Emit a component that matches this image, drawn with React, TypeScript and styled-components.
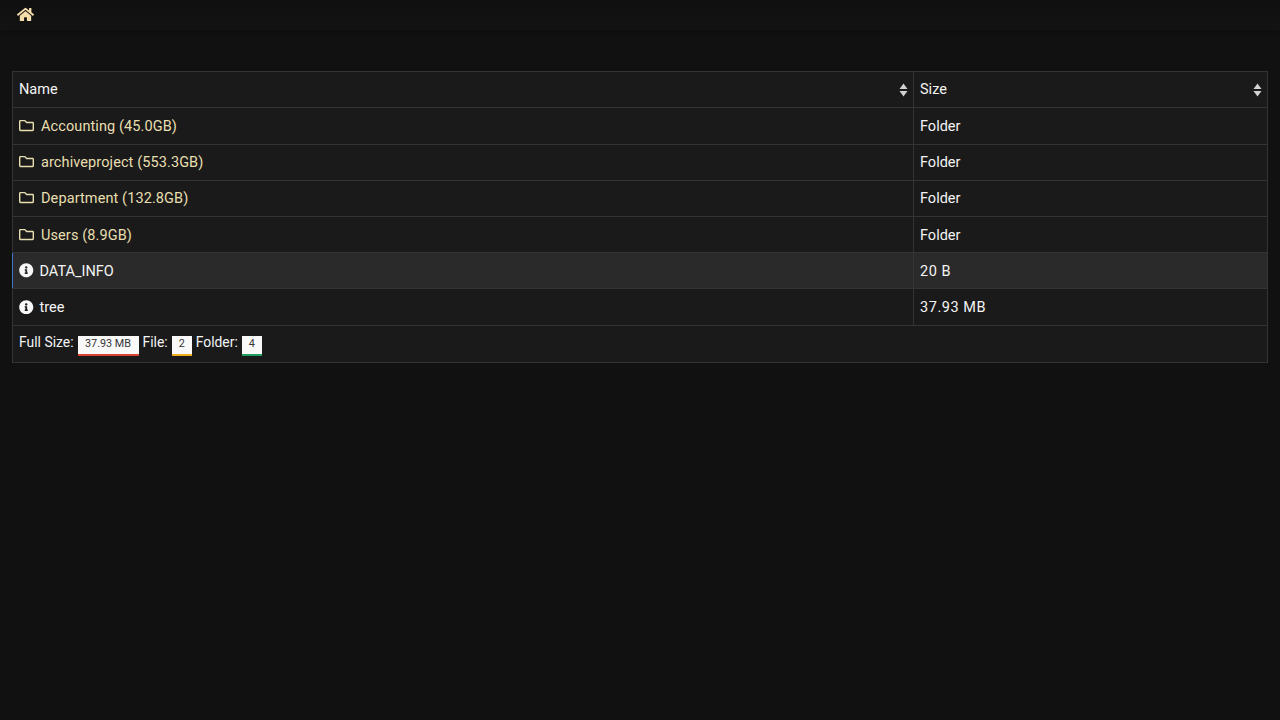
import React from "react";
import styled, { createGlobalStyle } from "styled-components";
import { FaHome, FaInfoCircle, FaRegFolder } from "react-icons/fa";

const Global = createGlobalStyle`
  html, body { margin: 0; padding: 0; background: #111111; }
  body { font-family: "Roboto", "Liberation Sans", sans-serif; font-size: 14.5px; color: #f4f4f4; }
`;

const Page = styled.div`
  min-height: 720px;
  box-sizing: border-box;
`;

const Navbar = styled.nav`
  height: 30px;
  box-sizing: border-box;
  display: flex;
  align-items: center;
  padding: 0 17px 1px;
  background: linear-gradient(#0f0f0f, #131313);
  box-shadow: 0 1px 4px rgba(0, 0, 0, 0.3);
`;

const HomeLink = styled.a`
  display: flex;
  color: #f6deaa;
  font-size: 17px;
`;

const Content = styled.main`
  padding: 41px 12px 0;
`;

const Table = styled.table`
  width: 100%;
  border-collapse: collapse;
  table-layout: fixed;
  background: #1a1a1a;
  border: 1px solid #343434;
`;

const Head = styled.th`
  position: relative;
  height: 36.4px;
  box-sizing: border-box;
  padding: 0 6px;
  border: 1px solid #343434;
  font-weight: 400;
  text-align: left;
  color: #f4f4f4;
`;

const SortGlyph = styled.svg`
  position: absolute;
  right: 4px;
  top: 11px;
  width: 11px;
  height: 14px;
  fill: #d2d2d2;
`;

const Row = styled.tr<{ $active?: boolean }>`
  background: ${(p) => (p.$active ? "#2a2a2a" : "transparent")};
  & > td:first-child {
    border-left-color: ${(p) => (p.$active ? "#3f78c9" : "#343434")};
  }
`;

const Cell = styled.td`
  height: 36.2px;
  box-sizing: border-box;
  padding: 1px 6px 0;
  border: 1px solid #343434;
`;

const SizeText = styled.span`
  letter-spacing: 0.55px;
`;

const NameWrap = styled.div<{ $gap: number }>`
  display: flex;
  align-items: center;
  gap: ${(p) => p.$gap}px;
`;

const FolderLink = styled.a`
  color: #e8dfb0;
  letter-spacing: 0.1px;
`;

const FolderIcon = styled(FaRegFolder)`
  font-size: 15px;
  color: #e8dfb0;
  margin-top: -2px;
`;

const InfoIcon = styled(FaInfoCircle)`
  font-size: 14.5px;
  color: #f8f8f8;
  margin-top: -1px;
`;

const Footer = styled.td`
  height: 37px;
  box-sizing: border-box;
  padding: 0 6px;
  border: 1px solid #343434;
  font-size: 13.9px;
`;

const FooterRow = styled.div`
  display: flex;
  align-items: flex-start;
  gap: 4px;
  margin-top: 3px;
`;

const Label = styled.span`
  line-height: 14px;
`;

const Badge = styled.span<{ $color: string; $width: number }>`
  width: ${(p) => p.$width}px;
  height: 20px;
  margin-top: 1px;
  box-sizing: border-box;
  display: flex;
  justify-content: center;
  padding-top: 2px;
  background: #f9f9f9;
  color: #333;
  font-size: 10.8px;
  line-height: 12px;
  border-bottom: 2px solid ${(p) => p.$color};
`;

const SortIcon = () => (
  <SortGlyph viewBox="0 0 11 14">
    <path d="M5.5 0.5 L9.5 6 H1.5 Z" />
    <path d="M5.5 13.5 L9.5 8 H1.5 Z" />
  </SortGlyph>
);

const folders = [
  "Accounting (45.0GB)",
  "archiveproject (553.3GB)",
  "Department (132.8GB)",
  "Users (8.9GB)",
];

export default function App() {
  return (
    <Page>
      <Global />
      <Navbar>
        <HomeLink>
          <FaHome />
        </HomeLink>
      </Navbar>
      <Content>
        <Table>
          <colgroup>
            <col style={{ width: 901 }} />
            <col />
          </colgroup>
          <thead>
            <tr>
              <Head>
                Name
                <SortIcon />
              </Head>
              <Head>
                Size
                <SortIcon />
              </Head>
            </tr>
          </thead>
          <tbody>
            {folders.map((name) => (
              <Row key={name}>
                <Cell>
                  <NameWrap $gap={7}>
                    <FolderIcon />
                    <FolderLink>{name}</FolderLink>
                  </NameWrap>
                </Cell>
                <Cell>Folder</Cell>
              </Row>
            ))}
            <Row $active>
              <Cell>
                <NameWrap $gap={6}>
                  <InfoIcon />
                  <span>DATA_INFO</span>
                </NameWrap>
              </Cell>
              <Cell><SizeText>20 B</SizeText></Cell>
            </Row>
            <Row>
              <Cell>
                <NameWrap $gap={6}>
                  <InfoIcon />
                  <span>tree</span>
                </NameWrap>
              </Cell>
              <Cell><SizeText>37.93 MB</SizeText></Cell>
            </Row>
            <tr>
              <Footer colSpan={2}>
                <FooterRow>
                  <Label>Full Size:</Label>
                  <Badge $color="#d9432f" $width={61}>37.93 MB</Badge>
                  <Label>File:</Label>
                  <Badge $color="#f0ad1e" $width={20}>2</Badge>
                  <Label>Folder:</Label>
                  <Badge $color="#1f9d61" $width={20}>4</Badge>
                </FooterRow>
              </Footer>
            </tr>
          </tbody>
        </Table>
      </Content>
    </Page>
  );
}
